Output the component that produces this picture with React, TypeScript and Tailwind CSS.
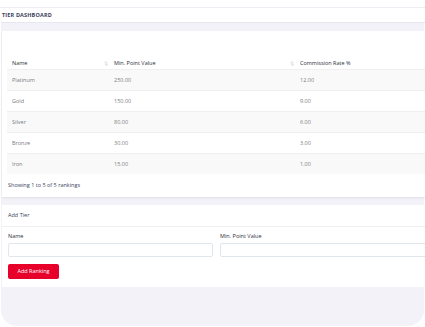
import React from "react";

const rows = [
  ["Platinum", "250.00", "12.00"],
  ["Gold", "150.00", "9.00"],
  ["Silver", "80.00", "6.00"],
  ["Bronze", "30.00", "3.00"],
  ["Iron", "15.00", "1.00"],
];

function SortIcon() {
  return (
    <svg width="4" height="5" viewBox="0 0 4 5" className="inline-block">
      <path d="M1.2 0.6 L1.2 4.2 M0.4 1.4 L1.2 0.6 L2 1.4" stroke="#d3d5dc" strokeWidth="0.5" fill="none" />
      <path d="M2.8 0.8 L2.8 4.4 M2 3.6 L2.8 4.4 L3.6 3.6" stroke="#b9bcc6" strokeWidth="0.5" fill="none" />
    </svg>
  );
}

export default function App() {
  return (
    <div
      className="w-[425px] h-[327px] bg-white overflow-hidden"
      style={{ fontFamily: '"Open Sans", "Noto Sans", sans-serif' }}
    >
      <div className="h-[8px] bg-white border-b border-[#eceef3]" />
      <div className="ml-[1px] w-[423px] h-[318px] bg-[#f2f2f8] rounded-b-[16px] flex flex-col">
        <div className="h-[15px] w-[430px] bg-white flex items-center pl-[1px] border-b border-[#e6e7ef]">
          <span className="text-[5.5px] font-bold text-[#3b3f5c] tracking-[0.15px]">TIER DASHBOARD</span>
        </div>
        <div className="h-[8px]" />
        <div className="ml-[1px] w-[430px] bg-white shadow-[0_1px_2px_rgba(0,0,0,0.08)] h-[166px] flex flex-col">
          <div className="h-[26px]" />
          <div className="px-[5px]">
            <div className="flex h-[12px] items-center text-[5.5px] text-[#2d2f3a]">
              <div className="w-[102px] pl-[5px] flex justify-between items-center pr-[1px]">
                <span>Name</span>
                <SortIcon />
              </div>
              <div className="w-[186px] pl-[5px] flex justify-between items-center pr-[1px]">
                <span>Min. Point Value</span>
                <SortIcon />
              </div>
              <div className="pl-[5px]">Commission Rate %</div>
            </div>
            {rows.map((r, i) => (
              <div
                key={r[0]}
                className={`flex h-[21px] items-center text-[5.5px] text-[#7a7b82] border-t border-[#f0f0f3] ${
                  i % 2 === 0 ? "bg-[#f9f9f9]" : "bg-white"
                }`}
              >
                <div className="w-[102px] pl-[5px]">{r[0]}</div>
                <div className="w-[186px] pl-[5px]">{r[1]}</div>
                <div className="pl-[5px]">{r[2]}</div>
              </div>
            ))}
          </div>
          <div className="pl-[6px] pt-[7px] text-[5.5px] text-[#3b3f5c]">Showing 1 to 5 of 5 rankings</div>
        </div>
        <div className="h-[8px]" />
        <div className="ml-[1px] w-[430px] bg-white h-[82px] flex flex-col">
          <div className="h-[22px] flex items-center pl-[6px] border-b border-[#eef0f4]">
            <span className="text-[5.5px] text-[#3b3f5c]">Add Tier</span>
          </div>
          <div className="pl-[6px] pt-[5px] grid grid-cols-[205px_220px] gap-x-[7px]">
            <div className="flex flex-col">
              <span className="text-[5.5px] text-[#2d2f3a] h-[8px] leading-[8px]">Name</span>
              <div className="mt-[3px] h-[14px] border border-[#e0e6ed] rounded-[2px] bg-white" />
            </div>
            <div className="flex flex-col">
              <span className="text-[5.5px] text-[#2d2f3a] h-[8px] leading-[8px]">Min. Point Value</span>
              <div className="mt-[3px] h-[14px] border border-[#e0e6ed] rounded-[2px] bg-white" />
            </div>
          </div>
          <div className="pl-[6px] pt-[7px]">
            <button className="w-[51px] h-[15px] bg-[#e7002a] rounded-[2px] text-white text-[5.5px] flex items-center justify-center">
              Add Ranking
            </button>
          </div>
        </div>
      </div>
    </div>
  );
}
